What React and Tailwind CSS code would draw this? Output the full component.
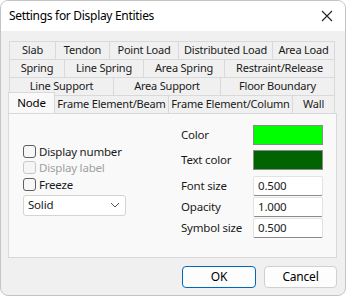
import React from 'react';

const rows = [
  [['Slab', 46], ['Tendon', 54], ['Point Load', 69], ['Distributed Load', 94], ['Area Load', 62]],
  [['Spring', 55], ['Line Spring', 79], ['Area Spring', 81], ['Restraint/Release', 110]],
  [['Line Support', 104], ['Area Support', 107], ['Floor Boundary', 114]],
];

function Tab({ label, width }) {
  return (
    <div
      className="h-[18px] -mr-px flex items-center justify-center whitespace-nowrap border border-b-0 border-[#d9d9d9] bg-[#f0f0f0] text-[11px] tracking-[-0.2px] text-[#1a1a1a]"
      style={{ width: width + 1 }}
    >
      {label}
    </div>
  );
}

function Check({ label, disabled }) {
  return (
    <label className={`flex items-center gap-[3px] h-[16.5px] ${disabled ? 'text-[#a0a0a0]' : 'text-[#1a1a1a]'}`}>
      <span
        className={`w-[13px] h-[13px] rounded-[3px] border ${disabled ? 'border-[#c8c8c8] bg-[#f5f5f5]' : 'border-[#5f5f5f] bg-[#f7f7f7]'}`}
      />
      {label}
    </label>
  );
}

function Swatch({ label, color }) {
  return (
    <div className="flex items-center h-[20px] mb-[5px]">
      <span className="w-[72px]">{label}</span>
      <span className="w-[70px] h-[20px] border border-[#8a8a8a]" style={{ backgroundColor: color }} />
    </div>
  );
}

function Field({ label, value }) {
  return (
    <div className="flex items-center h-[21px]">
      <span className="w-[72px]">{label}</span>
      <span className="w-[70px] h-[20px] flex items-center pl-[4px] bg-white border border-[#e3e3e3] border-b-[#8a8a8a] rounded-[2px]">
        {value}
      </span>
    </div>
  );
}

export default function App() {
  return (
    <div className="w-[346px] h-[296px] bg-white" style={{ fontFamily: '"Noto Sans", sans-serif' }}>
      <div className="w-[346px] h-[296px] flex flex-col rounded-[8px] overflow-hidden border border-[#c4c4c4] bg-[#f0f0f0] text-[11.5px] tracking-[-0.2px] text-[#1a1a1a]">
        <div className="h-[30px] bg-white flex items-center justify-between pl-[8px] pr-[9px]">
          <span className="text-[12px] tracking-[-0.3px] text-black">Settings for Display Entities</span>
          <svg width="12" height="12" viewBox="0 0 12 12" className="mr-[3px]">
            <path d="M1 1 L11 11 M11 1 L1 11" stroke="#222" strokeWidth="1.1" />
          </svg>
        </div>

        <div className="pt-[10px] pl-[8px]">
          {rows.map((row, i) => (
            <div key={i} className="flex">
              {row.map(([l, w]) => (
                <Tab key={l} label={l} width={w} />
              ))}
            </div>
          ))}
          <div className="flex items-end h-[18px] -ml-[1px]">
            <div className="w-[47px] h-[21px] -mt-[3px] flex items-start justify-center pt-[1px] border border-b-0 border-[#d9d9d9] bg-[#f9f9f9] relative z-10 text-[11.5px] text-black">
              Node
            </div>
            <div className="flex -ml-px h-[18px]">
              <Tab label="Frame Element/Beam" width={114} />
              <Tab label="Frame Element/Column" width={124} />
              <Tab label="Wall" width={42} />
            </div>
          </div>
          <div className="w-[329px] h-[145px] -ml-[1px] border border-[#d9d9d9] bg-[#f9f9f9] flex">
            <div className="w-[157px] pl-[14px] pt-[29px]">
              <Check label="Display number" />
              <Check label="Display label" disabled />
              <Check label="Freeze" />
              <div className="mt-[2px] w-[103px] h-[21px] bg-white border border-[#d4d4d4] rounded-[3px] flex items-center justify-between pl-[4px] pr-[5px]">
                <span>Solid</span>
                <svg width="10" height="6" viewBox="0 0 10 6">
                  <path d="M1 1 L5 5 L9 1" fill="none" stroke="#555" strokeWidth="1" />
                </svg>
              </div>
            </div>
            <div className="pt-[11px] pl-[15px]">
              <Swatch label="Color" color="#00ff00" />
              <Swatch label="Text color" color="#006400" />
              <div className="mt-[1px]">
                <Field label="Font size" value="0.500" />
                <Field label="Opacity" value="1.000" />
                <Field label="Symbol size" value="0.500" />
              </div>
            </div>
          </div>
        </div>

        <div className="flex justify-end gap-[8px] pr-[8px] pt-[8px]">
          <button className="w-[74px] h-[22px] bg-[#fdfdfd] border border-[#0067c0] rounded-[4px] text-[12px] text-black">
            OK
          </button>
          <button className="w-[73px] h-[22px] bg-[#fdfdfd] border border-[#d0d0d0] rounded-[4px] text-[12px] text-black">
            Cancel
          </button>
        </div>
      </div>
    </div>
  );
}
